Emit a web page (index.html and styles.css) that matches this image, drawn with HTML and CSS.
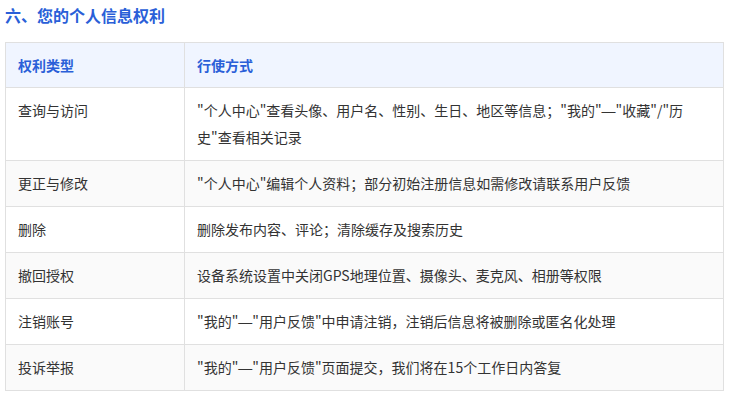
FILE: index.html
```html
<!DOCTYPE html>
<html lang="zh-CN">
<head>
<meta charset="utf-8">
<link rel="stylesheet" href="styles.css">
</head>
<body>
<section class="section">
  <h2 class="title">六、您的个人信息权利</h2>
  <table class="rights">
    <colgroup><col class="c1"><col class="c2"></colgroup>
    <thead>
      <tr><th>权利类型</th><th>行使方式</th></tr>
    </thead>
    <tbody>
      <tr><td>查询与访问</td><td>"个人中心"查看头像、用户名、性别、生日、地区等信息；"我的"<span class="dash">—</span>"收藏"/"历史"查看相关记录</td></tr>
      <tr><td>更正与修改</td><td>"个人中心"编辑个人资料；部分初始注册信息如需修改请联系用户反馈</td></tr>
      <tr><td>删除</td><td>删除发布内容、评论；清除缓存及搜索历史</td></tr>
      <tr><td>撤回授权</td><td>设备系统设置中关闭GPS地理位置、摄像头、麦克风、相册等权限</td></tr>
      <tr><td>注销账号</td><td>"我的"<span class="dash">—</span>"用户反馈"中申请注销，注销后信息将被删除或匿名化处理</td></tr>
      <tr><td>投诉举报</td><td>"我的"<span class="dash">—</span>"用户反馈"页面提交，我们将在15个工作日内答复</td></tr>
    </tbody>
  </table>
</section>
</body>
</html>
```
FILE: styles.css
```css
html, body {
  margin: 0;
  padding: 0;
  background: #ffffff;
}
body {
  font-family: "Microsoft YaHei", "Noto Sans CJK SC", "Noto Sans", sans-serif;
  color: #333333;
}
.section {
  padding: 0 6px 0 5px;
}
.title {
  margin: 3px 0 15px;
  font-size: 16px;
  line-height: 24px;
  font-weight: 700;
  color: #2a5fd8;
}
.rights {
  width: 100%;
  border-collapse: collapse;
  font-size: 14px;
  table-layout: fixed;
}
.c1 { width: 179px; }
.rights th, .rights td {
  border: 1px solid #e0e0e0;
  padding: 9px 12px;
  text-align: left;
  vertical-align: top;
}
.rights th {
  background: #f0f5ff;
  color: #2a5fd8;
  font-weight: 700;
  line-height: 26px;
}
.rights td {
  line-height: 27px;
}
.rights tbody tr:nth-child(even) td {
  background: #fafafa;
}
.dash {
  font-family: "Liberation Sans", sans-serif;
  line-height: 1;
}
```
